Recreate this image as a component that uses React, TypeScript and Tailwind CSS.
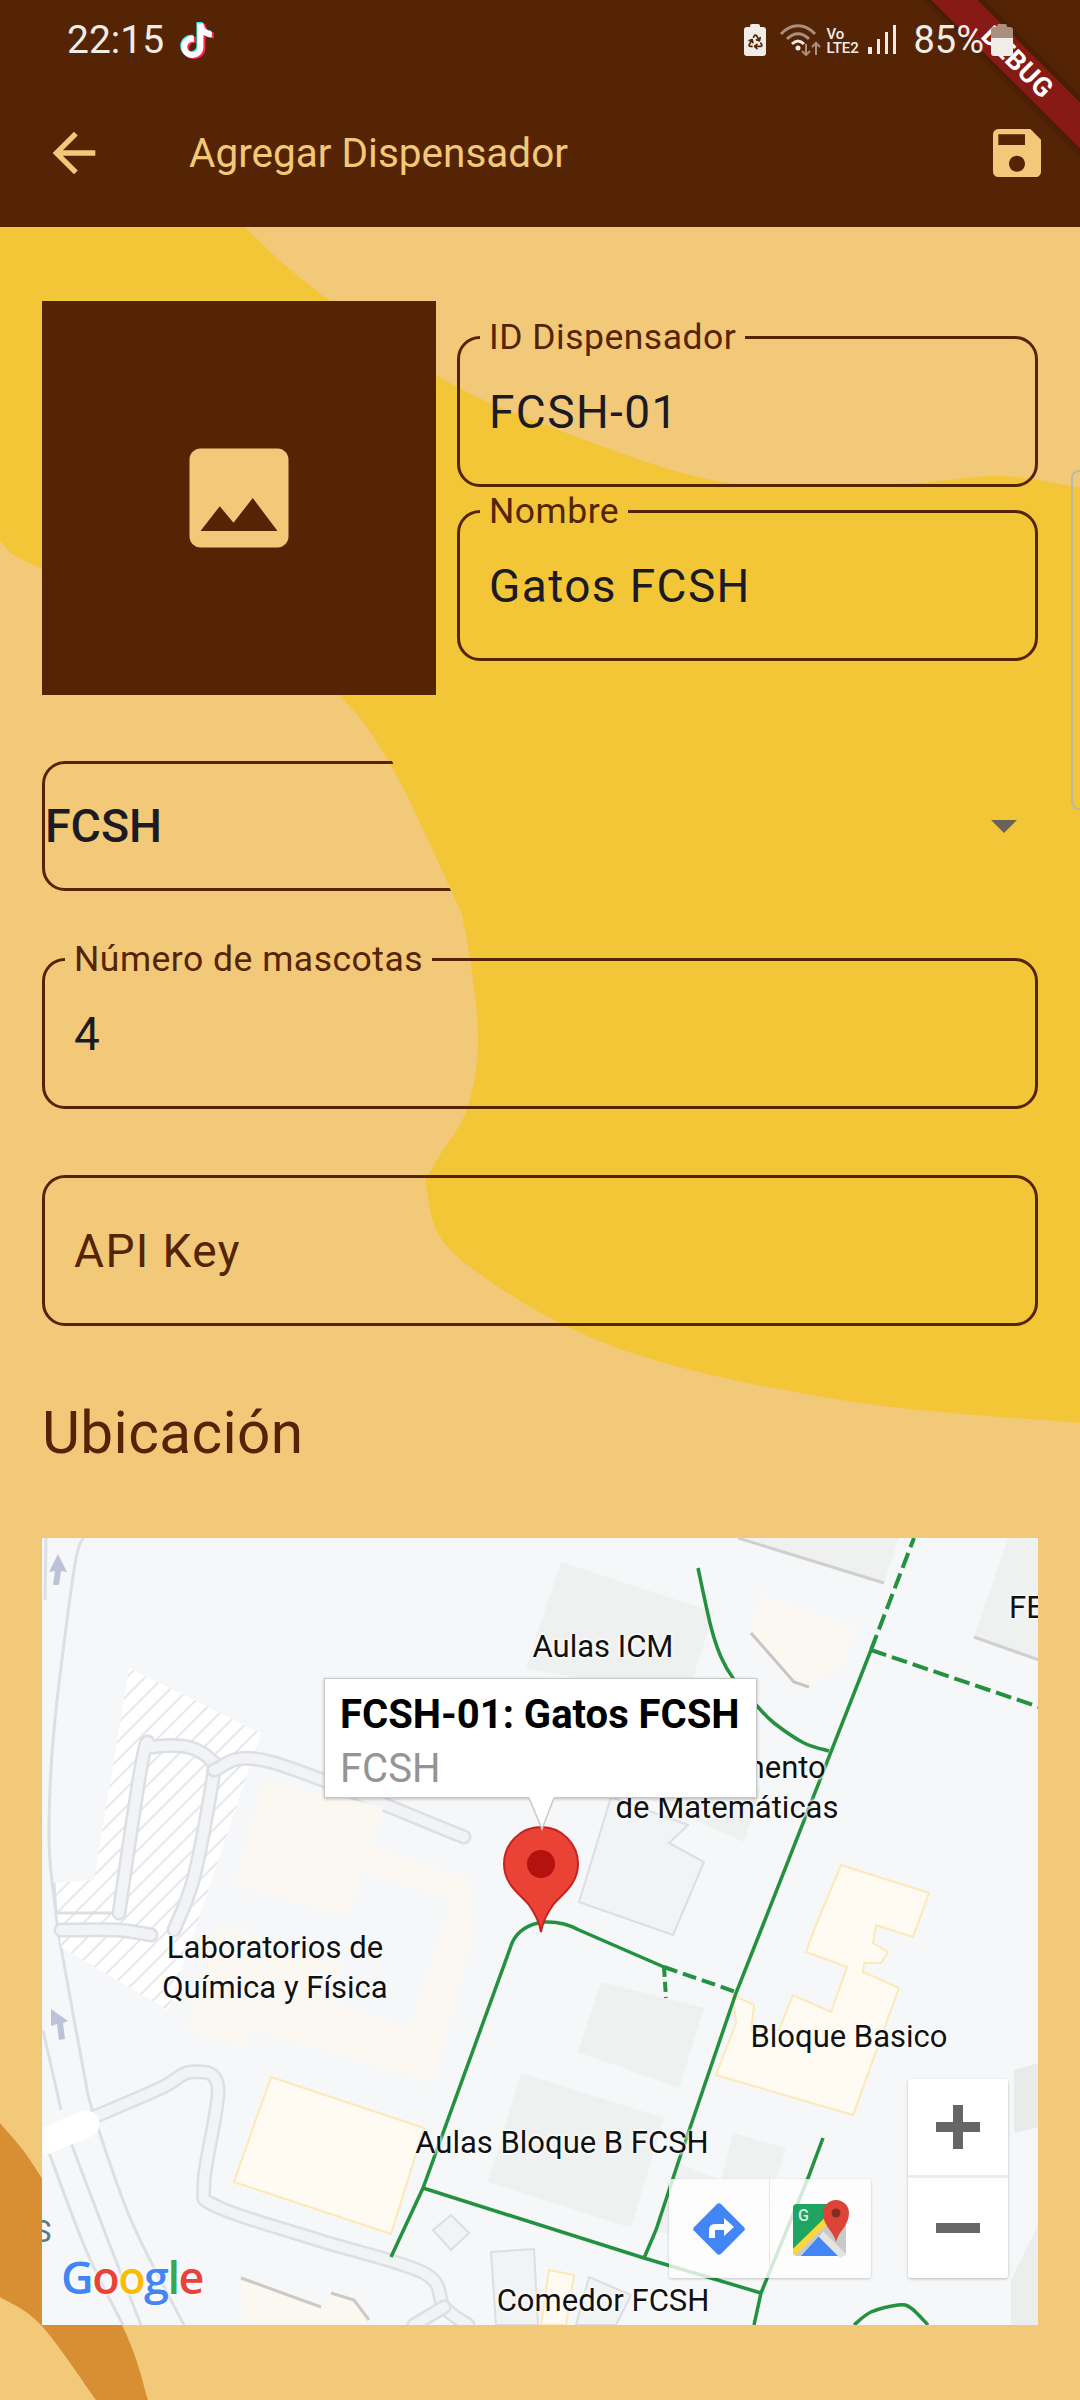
import { MdArrowBack, MdImage, MdSave } from 'react-icons/md';
import { FaTiktok } from 'react-icons/fa6';
import { Recycle } from 'lucide-react';

type Pt = [number, number];

// Catmull-Rom through the traced points, for blobs and roads
function smooth(pts: Pt[]) {
    let d = `M${pts[0][0]} ${pts[0][1]}`;
    for (let i = 0; i < pts.length - 1; i++) {
        const p0 = pts[Math.max(i - 1, 0)];
        const p1 = pts[i];
        const p2 = pts[i + 1];
        const p3 = pts[Math.min(i + 2, pts.length - 1)];
        d += ` C${p1[0] + (p2[0] - p0[0]) / 6} ${p1[1] + (p2[1] - p0[1]) / 6} ${p2[0] - (p3[0] - p1[0]) / 6} ${p2[1] - (p3[1] - p1[1]) / 6} ${p2[0]} ${p2[1]}`;
    }
    return d;
}

const yellowTop: Pt[] = [[245, 227], [303, 280], [434, 374], [551, 427], [723, 482], [895, 484], [999, 476], [1080, 488]];
const yellowBottom: Pt[] = [[1080, 1423], [841, 1400], [612, 1346], [459, 1258], [427, 1192], [434, 1165], [467, 1109], [478, 1033], [465, 930], [451, 890], [389, 762], [333, 690], [250, 640], [41, 568], [0, 541]];
const orangeRight: Pt[] = [[0, 2123], [41, 2177], [122, 2325], [148, 2400]];
const orangeLeft: Pt[] = [[96, 2400], [41, 2325], [0, 2297]];

function Blobs() {
    return (
        <svg className="absolute inset-0" width="1080" height="2400" viewBox="0 0 1080 2400">
            <path
                d={`M0 227 L245 227 ${smooth(yellowTop).replace(/^M\S+ \S+/, '')} ${smooth(yellowBottom).replace(/^M/, 'L')} Z`}
                fill="#f2c636"
            />
            <path d={`${smooth(orangeRight)} ${smooth(orangeLeft).replace(/^M/, 'L')} Z`} fill="#d88e33" />
        </svg>
    );
}

function StatusIcons() {
    return (
        <div className="relative z-20 flex items-center text-[#f0ece8]">
            <div className="relative w-[22px] h-[32px] mr-[13px] mt-[-1px]">
                <div className="absolute left-[6px] top-0 w-[10px] h-[4px] bg-[#f0ece8] rounded-t-[2px]" />
                <div className="absolute left-0 top-[3px] w-[22px] h-[29px] bg-[#f0ece8] rounded-[3px] flex items-center justify-center">
                    <Recycle size={17} color="#552405" strokeWidth={2.5} />
                </div>
            </div>
            <svg width="44" height="32" viewBox="0 0 44 32" className="mr-[3px]">
                <path d="M2 10 C12 -1 26 -1 36 10" fill="none" stroke="#a98f7e" strokeWidth="3" />
                <path d="M8 15 C15 8 23 8 30 15" fill="none" stroke="#a98f7e" strokeWidth="3" />
                <path d="M13 20 C17 16 21 16 25 20" fill="none" stroke="#f0ece8" strokeWidth="3" />
                <circle cx="19" cy="24" r="2.5" fill="#f0ece8" />
                <path d="M27 20 V31 M23 27 L27 31 L31 27" fill="none" stroke="#a98f7e" strokeWidth="2" />
                <path d="M37 31 V19 M33 23 L37 19 L41 23" fill="none" stroke="#a98f7e" strokeWidth="2" />
            </svg>
            <div className="w-[36px] text-[15px] leading-[14px] font-medium mr-[6px] mt-[2px]">
                <div>Vo</div>
                <div>LTE2</div>
            </div>
            <svg width="28" height="30" viewBox="0 0 28 30" className="mr-[17px]">
                <rect x="0" y="22" width="4" height="7" fill="#f0ece8" />
                <rect x="9" y="14" width="3" height="15" fill="#f0ece8" />
                <rect x="17" y="7" width="3" height="22" fill="#f0ece8" />
                <rect x="25" y="0" width="3" height="29" fill="#f0ece8" />
            </svg>
            <span className="text-[38px] leading-none">85%</span>
            <div className="relative w-[22px] h-[32px] ml-[7px]">
                <div className="absolute left-[6px] top-0 w-[10px] h-[4px] bg-[#a98f7e] rounded-t-[2px]" />
                <div className="absolute left-0 top-[3px] w-[22px] h-[11px] bg-[#a98f7e] rounded-t-[3px]" />
                <div className="absolute left-0 top-[14px] w-[22px] h-[18px] bg-[#f0ece8] rounded-b-[3px]" />
            </div>
        </div>
    );
}

function TikTok() {
    return (
        <div className="relative w-[34px] h-[39px] ml-[15px]">
            <FaTiktok size={35} color="#25f4ee" className="absolute left-[-1.5px] top-[1px]" />
            <FaTiktok size={35} color="#fe2c55" className="absolute left-[1.5px] top-[3px]" />
            <FaTiktok size={35} color="#ffffff" className="absolute left-0 top-[2px]" />
        </div>
    );
}

function Header() {
    return (
        <div className="relative h-[227px] bg-[#552405] flex flex-col shrink-0">
            <div className="h-[80px] pl-[67px] pr-[67px] flex items-center justify-between">
                <div className="flex items-center">
                    <span className="text-[39px] leading-none text-[#f0ece8]">22:15</span>
                    <TikTok />
                </div>
                <StatusIcons />
            </div>
            <div className="flex items-center h-[146px] text-[#f2c879]">
                <MdArrowBack size={64} className="ml-[42px]" />
                <span className="ml-[83px] text-[40.5px] leading-none">Agregar Dispensador</span>
                <MdSave size={64} className="ml-auto mr-[31px]" />
            </div>
        </div>
    );
}

function Field({ label, value, notch }: { label?: string; value: string; notch?: string }) {
    return (
        <div className="relative h-[151px] w-full border-[3px] border-[#552405] rounded-[23px] flex items-center pl-[29px]">
            {label && (
                <span className={`absolute left-[20px] top-[-23px] px-[9px] h-[42px] leading-[42px] text-[35.5px] tracking-[0.5px] whitespace-nowrap text-[#552405] ${notch}`}>
                    {label}
                </span>
            )}
            <span className={`text-[46px] leading-none tracking-[1.4px] ${label ? 'text-[#1c1b24]' : 'text-[#552405]'}`}>{value}</span>
        </div>
    );
}

function Dropdown() {
    return (
        <div className="relative h-[130px] flex items-center justify-between pl-[3px] pr-[21px] mt-[66px]">
            {/* the yellow blob swallows this outline on the real screen */}
            <div className="absolute inset-0 border-[3px] border-[#552405] rounded-[23px] [clip-path:polygon(0_0,350px_0,409px_100%,0_100%)]" />
            <span className="text-[46.5px] leading-none font-medium text-[#1c1b24]">FCSH</span>
            <div className="w-0 h-0 border-x-[13.5px] border-x-transparent border-t-[13px] border-t-[#6b6256]" />
        </div>
    );
}

const grayBlocks = [
    '560,1562 713,1612 685,1700 525,1668',
    '737,1538 883,1583 898,1538',
    '1007,1538 973,1637 1038,1660 1038,1538',
    '650,1800 760,1787 743,1842',
    '600,1982 703,2008 678,2088 577,2052',
    '520,2073 663,2118 630,2228 487,2182',
    '677,2163 720,2180 732,2133 785,2148 750,2260 653,2230',
];

function MapDrawing() {
    return (
        <svg className="absolute inset-0" width="997" height="787" viewBox="41 1538 997 787">
            <defs>
                <pattern id="hatch" width="13" height="13" patternUnits="userSpaceOnUse" patternTransform="rotate(45)">
                    <rect width="13" height="13" fill="#ffffff" />
                    <rect width="2" height="13" fill="#e6e7ea" />
                </pattern>
            </defs>

            {/* outer roads */}
            <path d={smooth([[82, 1538], [73, 1570], [53, 1730], [48, 1840], [55, 1913], [60, 1947], [83, 2073], [92, 2112], [130, 2220], [183, 2325]])} fill="none" stroke="#dcdfe3" strokeWidth="3" />
            <path d={smooth([[45, 1538], [44, 1600]])} fill="none" stroke="#dcdfe3" strokeWidth="3" />
            <path d={smooth([[42, 2030], [60, 2110]])} fill="none" stroke="#dcdfe3" strokeWidth="3" />
            <path d={smooth([[70, 2143], [103, 2230], [140, 2325]])} fill="none" stroke="#dcdfe3" strokeWidth="3" />
            <path d={smooth([[47, 2150], [85, 2250], [122, 2325]])} fill="none" stroke="#dcdfe3" strokeWidth="3" />

            {/* hatched lot */}
            <polygon points="128,1668 260,1733 167,2010 60,1947 53,1883 93,1880" fill="url(#hatch)" />
            <path d="M53 1883 L55 1913 L112 1913" fill="none" stroke="#dcdfe3" strokeWidth="3" />

            {/* loop and branch roads */}
            {[
                [[118, 1913], [142, 1757], [153, 1747], [187, 1747], [210, 1760], [212, 1777], [193, 1877], [173, 1930]],
                [[213, 1770], [270, 1762], [463, 1837]],
                [[60, 1930], [115, 1930], [133, 1932], [150, 1935]],
                [[93, 2117], [160, 2088], [190, 2072], [217, 2087], [203, 2183], [217, 2207], [317, 2240], [423, 2273], [443, 2307], [467, 2325]],
                [[443, 2307], [413, 2325]],
            ].map((r, i) => (
                <g key={i}>
                    <path d={smooth(r as Pt[])} fill="none" stroke="#dcdfe3" strokeWidth="15" strokeLinecap="round" />
                    <path d={smooth(r as Pt[])} fill="none" stroke="#f1f3f5" strokeWidth="10" strokeLinecap="round" />
                </g>
            ))}
            <path d="M41 2142 L85 2124" stroke="#ffffff" strokeWidth="27" strokeLinecap="round" />

            {/* cream buildings */}
            <polygon points="263,1780 383,1807 347,1917 233,1885" fill="#fbf7f1" />
            <polygon points="370,1845 468,1880 473,1930 433,2083 250,2030 243,2047 185,2030 218,1925 342,1962 333,2002 408,2028 450,1900 362,1873" fill="#fbf7f1" />
            <polygon points="760,1595 853,1627 845,1662 808,1687 793,1682 750,1633" fill="#fbf7f1" />
            <path d="M750 1633 L793 1682 L808 1687" fill="none" stroke="#c9c5c0" strokeWidth="3" />
            <polygon points="240,2278 320,2307 330,2293 353,2300 368,2317 368,2325 243,2325" fill="#fbf7f1" />
            <path d="M240 2278 L320 2307 M330 2293 L353 2300 L368 2320" fill="none" stroke="#cfc9c3" strokeWidth="3" />

            {/* grey buildings */}
            {grayBlocks.map((p) => (
                <polygon key={p} points={p} fill="#eff1f0" />
            ))}
            <path d="M737 1538 L883 1583" fill="none" stroke="#cfcfcf" strokeWidth="3" />
            <path d="M973 1637 L1038 1660" fill="none" stroke="#cfcfcf" strokeWidth="3" />
            <polygon points="610,1797 687,1825 668,1843 703,1862 672,1935 578,1902" fill="#f1f3f5" stroke="#dcdee1" strokeWidth="2" />
            <polygon points="1013,2070 1038,2063 1038,2127 1013,2133" fill="#e9eaea" />
            <polygon points="1010,2280 1038,2223 1038,2325 1010,2325" fill="#eceded" />
            <polygon points="432,2230 450,2215 468,2233 450,2250" fill="#f1f3f5" stroke="#dcdee1" strokeWidth="2" />
            <polygon points="490,2252 533,2249 537,2325 495,2325" fill="#f1f3f5" stroke="#dcdee1" strokeWidth="2" />
            <polygon points="588,2277 630,2295 615,2325 575,2325" fill="#f1f3f5" stroke="#dcdee1" strokeWidth="2" />

            {/* pale yellow buildings */}
            <polygon points="270,2077 423,2128 390,2234 233,2182" fill="#fffbf2" stroke="#fde9b6" strokeWidth="2" />
            <polygon points="840,1865 928,1893 912,1937 875,1925 872,1943 887,1952 880,1963 863,1963 862,1972 898,1988 852,2115 715,2075 735,2023 732,1995 753,2005 750,2030 778,2030 792,1995 830,2012 846,1967 805,1952 813,1930" fill="#fffbf2" stroke="#fde9b6" strokeWidth="2" />
            <polygon points="548,2270 573,2275 565,2325 540,2325" fill="#fffbf2" stroke="#fde9b6" strokeWidth="2" />

            {/* footpaths */}
            <g fill="none" stroke="#23913f" strokeWidth="3.5">
                <path d="M390 2257 L422 2188 L511 1943 Q519 1925 543 1922 Q562 1921 578 1930 L663 1967" />
                <path d="M422 2188 L643 2258 L760 2293" />
                <path d="M643 2258 L655 2230 L677 2163 L735 1993 L760 1930 L870 1650" />
                <path d="M870 1650 L913 1538" strokeWidth="4" strokeDasharray="16 6" />
                <path d="M870 1650 L1038 1707" strokeWidth="4" strokeDasharray="16 6" />
                <path d="M663 1967 L735 1992" strokeWidth="4" strokeDasharray="14 6" />
                <path d="M663 1967 L665 1998" strokeWidth="4" strokeDasharray="10 5" />
                <path d={smooth([[697, 1568], [710, 1627], [720, 1657], [732, 1678], [757, 1707], [773, 1723], [803, 1743], [828, 1751]])} />
                <path d="M822 2138 L807 2178 L760 2293 L753 2325" />
                <path d={smooth([[853, 2325], [870, 2312], [897, 2305], [910, 2308], [927, 2325]])} />
            </g>

            {/* one-way arrows */}
            <path d="M57 1554 L66 1572 L60 1571 L58 1585 L52 1585 L54 1571 L48 1572 Z" fill="#bcc2d8" />
            <path d="M50 2009 L67 2021 L62 2023 L64 2039 L58 2040 L56 2024 L50 2026 Z" fill="#bcc2d8" />
        </svg>
    );
}

function MapPin() {
    return (
        <svg className="absolute left-[457px] top-[285px]" width="84" height="112" viewBox="498 1823 84 112">
            <path d="M540 1932 C538 1920 533 1912 528 1905 C520 1895 503 1885 503 1864 A37 37 0 0 1 577 1864 C577 1885 560 1895 552 1905 C547 1912 542 1920 540 1932 Z" fill="#ea4335" stroke="#c5221f" strokeWidth="2" />
            <circle cx="540" cy="1864" r="14" fill="#b3120e" />
        </svg>
    );
}

function PlaceLabel({ x, y, w, children }: { x: number; y: number; w: number; children: string }) {
    return (
        <span
            className="absolute text-center text-[31px] leading-[36px] whitespace-nowrap text-[#111] [text-shadow:0_0_3px_#fff,0_0_3px_#fff,0_0_4px_#fff]"
            style={{ left: x - 41 - w / 2, top: y - 1538 - 18, width: w }}
        >
            {children}
        </span>
    );
}

function DirectionsIcon() {
    return (
        <svg width="56" height="56" viewBox="-28 -28 56 56">
            <rect x="-19" y="-19" width="38" height="38" rx="3" transform="rotate(45)" fill="#4285f4" />
            <path d="M-7 9 V1 Q-7 -2 -4 -2 H7" fill="none" stroke="#fff" strokeWidth="6" />
            <path d="M5 -11 L15 -2 L5 7 Z" fill="#fff" />
        </svg>
    );
}

function MapsIcon() {
    return (
        <svg width="56" height="60" viewBox="0 -5 56 60">
            <rect x="0" y="0" width="53" height="52" rx="4" fill="#c9c9c9" />
            <path d="M4 0 H42 V8 L0 50 V4 Q0 0 4 0 Z" fill="#1fa463" />
            <path d="M8 52 L28 30 L47 52 Z" fill="#4285f4" />
            <path d="M28 30 L50 52" stroke="#e4e4e4" strokeWidth="7" />
            <path d="M0 49 L35 15" stroke="#fdd835" strokeWidth="6" />
            <text x="5" y="17" fontSize="16" fontWeight="500" fill="#d7efe2" fontFamily="Roboto, sans-serif">G</text>
            <path d="M43 38 C41 28 30 22 30 9 A13 13 0 0 1 56 9 C56 22 45 28 43 38 Z" fill="#db4437" />
            <circle cx="43" cy="9" r="4.5" fill="#842b22" />
        </svg>
    );
}

function GoogleMark() {
    return (
        <span className="absolute left-[19px] top-[716px] text-[45px] leading-none font-semibold tracking-[-1.5px] font-['Open_Sans',sans-serif] [text-shadow:0_0_3px_#fff,0_0_4px_#fff]">
            <span className="text-[#4285f4]">G</span>
            <span className="text-[#ea4335]">o</span>
            <span className="text-[#fbbc05]">o</span>
            <span className="text-[#4285f4]">g</span>
            <span className="text-[#34a853]">l</span>
            <span className="text-[#ea4335]">e</span>
        </span>
    );
}

function GoogleMap() {
    return (
        <div className="relative h-[787px] bg-[#f6f7f9] overflow-hidden mt-[72px]">
            <MapDrawing />
            <PlaceLabel x={602} y={1647} w={200}>Aulas ICM</PlaceLabel>
            <span className="absolute left-[967px] top-[52px] text-[31px] leading-[36px] text-[#111] [text-shadow:0_0_3px_#fff,0_0_4px_#fff]">FE</span>
            <PlaceLabel x={726} y={1768} w={240}>Departamento</PlaceLabel>
            <PlaceLabel x={726} y={1808} w={260}>de Matemáticas</PlaceLabel>
            <PlaceLabel x={274} y={1948} w={280}>Laboratorios de</PlaceLabel>
            <PlaceLabel x={274} y={1988} w={280}>Química y Física</PlaceLabel>
            <PlaceLabel x={561} y={2143} w={340}>Aulas Bloque B FCSH</PlaceLabel>
            <PlaceLabel x={848} y={2037} w={240}>Bloque Basico</PlaceLabel>
            <PlaceLabel x={602} y={2301} w={260}>Comedor FCSH</PlaceLabel>
            <span className="absolute left-[-9px] top-[676px] text-[31px] leading-[36px] text-[#5a7a80]">S</span>

            <GoogleMark />
            <MapPin />

            {/* info window */}
            <div className="absolute left-[282px] top-[140px] w-[433px] h-[120px] bg-white border border-[#c9c9c9] shadow-[0_1px_3px_rgba(0,0,0,0.25)] pl-[15px] pt-[14px]">
                <div className="text-[40px] leading-[44px] font-bold text-black whitespace-nowrap">FCSH-01: Gatos FCSH</div>
                <div className="text-[40px] leading-[44px] mt-[10px] text-[#949494]">FCSH</div>
                <svg className="absolute left-[204px] top-[118px]" width="26" height="34" viewBox="0 0 26 34">
                    <path d="M0 0 L13 32 L25 0 Z" fill="#fff" />
                    <path d="M0 1 L13 32 L25 1" fill="none" stroke="#c9c9c9" strokeWidth="1.5" />
                </svg>
            </div>

            {/* toolbar */}
            <div className="absolute left-[627px] top-[641px] w-[202px] h-[99px] flex bg-white/80 rounded-[3px] shadow-[0_1px_3px_rgba(0,0,0,0.2)]">
                <div className="w-[101px] flex items-center justify-center border-r border-[#e8e8e8]">
                    <DirectionsIcon />
                </div>
                <div className="w-[101px] flex items-center justify-center">
                    <MapsIcon />
                </div>
            </div>

            {/* zoom buttons */}
            <div className="absolute left-[866px] top-[541px] w-[100px] h-[199px] flex flex-col bg-white/95 rounded-[3px] shadow-[0_1px_3px_rgba(0,0,0,0.25)]">
                <div className="h-[99px] border-b-[3px] border-[#ececec] flex items-center justify-center">
                    <svg width="44" height="44" viewBox="0 0 44 44">
                        <path d="M17 0 H27 V17 H44 V27 H27 V44 H17 V27 H0 V17 H17 Z" fill="#666" />
                    </svg>
                </div>
                <div className="flex-1 flex items-center justify-center">
                    <div className="w-[44px] h-[10px] bg-[#666]" />
                </div>
            </div>
        </div>
    );
}

export default function App() {
    return (
        <div className="relative w-[1080px] h-[2400px] overflow-hidden bg-[#f2c879] font-[Roboto,sans-serif] flex flex-col">
            <Blobs />
            <Header />

            <div className="relative px-[42px] pt-[74px]">
                <div className="flex">
                    <div className="w-[394px] h-[394px] bg-[#552405] flex items-center justify-center shrink-0">
                        <MdImage size={132} color="#f2c879" />
                    </div>
                    <div className="ml-[21px] flex-1 pt-[35px] flex flex-col gap-[23px]">
                        <Field label="ID Dispensador" value="FCSH-01" notch="bg-[#f2c879]" />
                        <Field label="Nombre" value="Gatos FCSH" notch="bg-[#f2c636]" />
                    </div>
                </div>

                <Dropdown />

                <div className="mt-[67px]">
                    <Field label="Número de mascotas" value="4" notch="bg-[#f2c879]" />
                </div>
                <div className="mt-[66px]">
                    <Field value="API Key" />
                </div>

                <div className="mt-[74px] text-[58.5px] leading-[66px] tracking-[0.4px] text-[#552405]">Ubicación</div>

                <GoogleMap />
            </div>

            {/* edge tab at the right of the form */}
            <div className="absolute left-[1071px] top-[470px] w-[20px] h-[340px] border-2 border-[#bdb7a6] rounded-l-[8px]" />

            {/* debug banner */}
            <div className="absolute left-[867px] top-[46px] w-[300px] h-[33px] rotate-45 bg-[#871a14] shadow-[0_0_12px_rgba(0,0,0,0.4)] flex items-center justify-center">
                <span className="text-[27px] leading-none font-bold text-white tracking-[0.5px]">DEBUG</span>
            </div>
        </div>
    );
}
